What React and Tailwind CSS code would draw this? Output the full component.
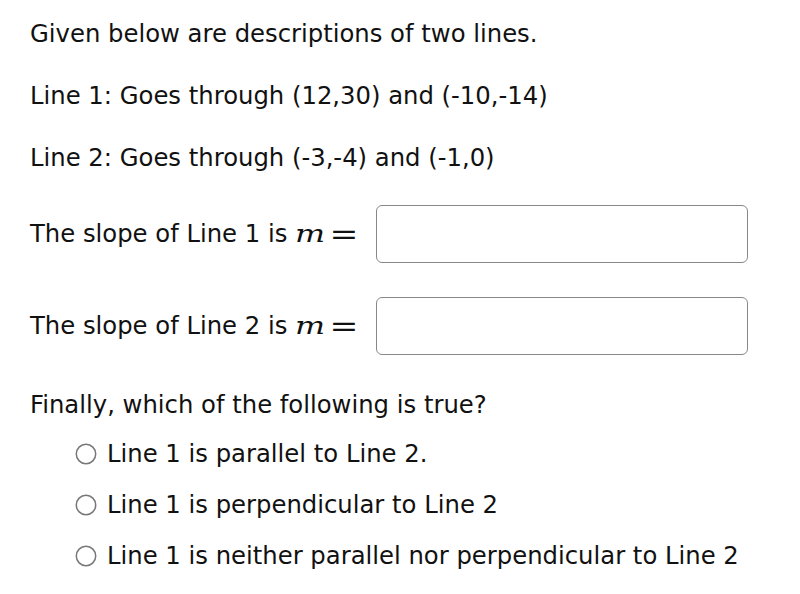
const options = [
  "Line 1 is parallel to Line 2.",
  "Line 1 is perpendicular to Line 2",
  "Line 1 is neither parallel nor perpendicular to Line 2",
];

function MathM() {
  return (
    <span className="inline-flex items-center">
      <span className="ml-[4px] w-[38px] text-center font-['DejaVu_Serif'] italic text-[25px] leading-[28px] scale-x-[1.27]">m</span>
      <span className="ml-[1px] w-[28px] text-center font-['DejaVu_Serif'] text-[30px] leading-[28px] scale-x-[1.15]">=</span>
    </span>
  );
}

function SlopeRow({ line }) {
  return (
    <div className="flex items-center h-[58px]">
      <span className="leading-[28px]">The slope of Line {line} is</span>
      <MathM />
      <input
        type="text"
        className="ml-[18px] w-[372px] h-[58px] border border-[#888] rounded-[6px] bg-white outline-none"
      />
    </div>
  );
}

function Radio({ label }) {
  return (
    <label className="flex items-center h-[28px]">
      <svg width="22" height="22" viewBox="0 0 22 22" className="shrink-0">
        <circle cx="11" cy="11" r="9.7" fill="white" stroke="#777" strokeWidth="1.5" />
      </svg>
      <span className="ml-[10px] leading-[28px]">{label}</span>
    </label>
  );
}

export default function App() {
  return (
    <div className="bg-white min-h-[594px] pt-[20px] pl-[30px] text-[#111] font-['DejaVu_Sans',sans-serif] text-[24.3px]">
      <p className="leading-[28px]">Given below are descriptions of two lines.</p>
      <p className="leading-[28px] mt-[34px]">Line 1: Goes through (12,30) and (-10,-14)</p>
      <p className="leading-[28px] mt-[34px]">Line 2: Goes through (-3,-4) and (-1,0)</p>
      <div className="mt-[33px]">
        <SlopeRow line={1} />
      </div>
      <div className="mt-[34px]">
        <SlopeRow line={2} />
      </div>
      <p className="leading-[28px] mt-[36px]">Finally, which of the following is true?</p>
      <div className="pl-[45px] mt-[21px] flex flex-col gap-[23px]">
        {options.map((o) => (
          <Radio key={o} label={o} />
        ))}
      </div>
    </div>
  );
}
